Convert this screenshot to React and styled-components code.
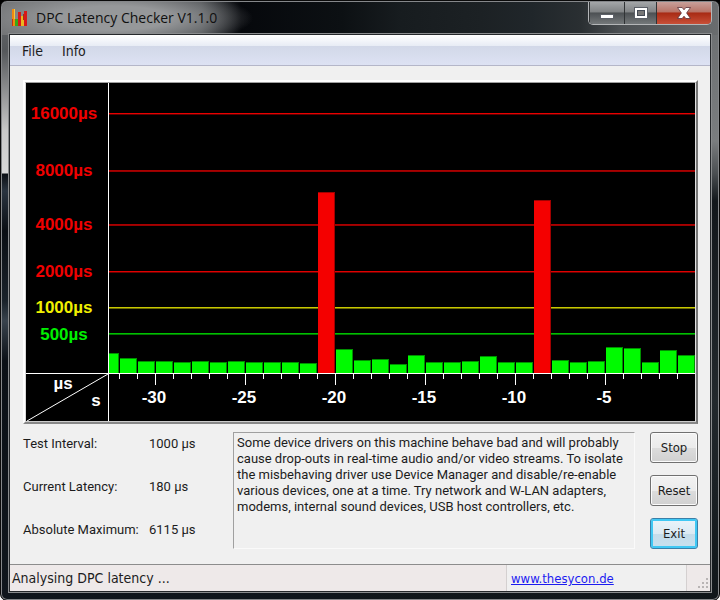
import React from "react";
import styled, { createGlobalStyle } from "styled-components";

const uiFont = '"DejaVu Sans Condensed", "DejaVu Sans", sans-serif';
const textFont = 'Roboto, "Liberation Sans", sans-serif';
const titleFont = '"Open Sans", "Noto Sans", sans-serif';

// y positions are in the chart's own units, from the top of the plot
const levels = [
  { label: "16000µs", y: 30, textY: 36, line: "#e80000", shade: "#600000", color: "#f00000" },
  { label: "8000µs", y: 87, textY: 93, line: "#a80000", shade: "#980000", color: "#f00000" },
  { label: "4000µs", y: 141, textY: 147, line: "#a80000", shade: "#980000", color: "#f00000" },
  { label: "2000µs", y: 188, textY: 194, line: "#e00000", shade: "#680000", color: "#f00000" },
  { label: "1000µs", y: 224, textY: 230, line: "#c8c800", shade: "#6c6c00", color: "#f0f000" },
  { label: "500µs", y: 250, textY: 257, line: "#00c000", shade: "#007800", color: "#00f000" },
];

const samples = [
  20, 15, 12, 12, 11, 12, 11, 12, 11, 11, 11, 10, 181, 24, 13, 14, 9, 18, 11,
  11, 12, 17, 11, 11, 173, 13, 11, 12, 26, 25, 11, 23, 18,
];

const seconds = [-30, -25, -20, -15, -10, -5];

const stats = [
  { name: "Test Interval:", value: "1000 µs" },
  { name: "Current Latency:", value: "180 µs" },
  { name: "Absolute Maximum:", value: "6115 µs" },
];

const BASE = 290;
const STEP = 18;
const AXIS = 82;

const Chart = () => {
  return (
    <ChartFrame>
      <Plot viewBox="0 0 669 338" role="img" aria-label="DPC latency">
        <rect width="669" height="338" fill="#000" />
        {levels.map((el) => (
          <g key={el.label}>
            <rect x={AXIS} y={el.y} width="587" height="1" fill={el.line} />
            <rect x={AXIS} y={el.y + 1} width="587" height="1" fill={el.shade} />
            <ChartText x="38" y={el.textY} fill={el.color}>
              {el.label}
            </ChartText>
          </g>
        ))}
        {samples.map((value, i) => {
          const x = i === 0 ? AXIS + 1 : 76 + i * STEP;
          const width = i === 0 ? 10 : 17;
          const high = value > 100;
          return (
            <g key={i}>
              <rect
                x={x}
                y={BASE - value}
                width={width}
                height={value}
                fill={high ? "#a00000" : "#009000"}
              />
              <rect
                x={x}
                y={BASE - value + 1}
                width={width - 1}
                height={value - 1}
                fill={high ? "#f40000" : "#00fa00"}
              />
            </g>
          );
        })}
        <rect x={AXIS} width="1" height="338" fill="#fff" />
        <rect y={BASE} width="669" height="1" fill="#fff" />
        {samples.map((value, i) => (
          <rect
            key={i}
            x={93 + i * STEP}
            y={BASE + 1}
            width="1"
            height={i % 5 === 2 ? 11 : 5}
            fill="#fff"
          />
        ))}
        {seconds.map((el, i) => (
          <ChartText key={el} x={128 + i * 90} y="320" fill="#fff">
            {el}
          </ChartText>
        ))}
        <path d="M1 338L82 291" stroke="#fff" strokeWidth="1" />
        <ChartText x="37" y="306" fill="#fff">
          µs
        </ChartText>
        <ChartText x="70" y="323" fill="#fff">
          s
        </ChartText>
      </Plot>
    </ChartFrame>
  );
};

const AppIcon = () => (
  <svg width="17" height="19" viewBox="0 0 17 19" aria-hidden="true">
    <rect x="1" y="1" width="3" height="17" fill="#f08a10" />
    <rect x="1" y="11" width="1" height="7" fill="#c83010" />
    <rect x="3" y="1" width="1" height="10" fill="#f8c840" />
    <rect x="4" y="11" width="3" height="7" fill="#38a818" />
    <rect x="7" y="4" width="3" height="14" fill="#d81818" />
    <rect x="10" y="8" width="3" height="10" fill="#e8b820" />
    <rect x="12" y="6" width="1" height="6" fill="#a83010" />
    <rect x="13" y="3" width="3" height="15" fill="#d81818" />
  </svg>
);

const App = () => {
  return (
    <>
      <GlobalStyle />
      <Window>
        <TitleBar>
          <AppIcon />
          <Title>DPC Latency Checker V1.1.0</Title>
          <Controls>
            <ControlButton $width={35} aria-label="Minimize">
              <svg width="14" height="14" viewBox="0 0 14 14">
                <rect x="0.5" y="8.500" width="13" height="4" fill="#fff" stroke="#5c6068" />
              </svg>
            </ControlButton>
            <ControlButton $width={32} aria-label="Maximize">
              <svg width="14" height="12" viewBox="0 0 14 12">
                <rect x="0.5" y="0.5" width="13" height="11" fill="#fff" stroke="#5c6068" />
                <rect x="3.5" y="3.5" width="7" height="5" fill="#777" stroke="#444a55" />
              </svg>
            </ControlButton>
            <ControlButton $width={55} $close aria-label="Close">
              <svg width="14" height="12" viewBox="0 0 14 12">
                <path
                  d="M.5.5h4.700L7 2.800 8.800.5h4.700L9.600 6l3.900 5.500H8.800L7 9.200 5.200 11.500H.5L4.400 6z"
                  fill="#fff"
                  stroke="#5a3038"
                  strokeWidth="0.8"
                />
              </svg>
            </ControlButton>
          </Controls>
        </TitleBar>
        <Client>
          <MenuBar>
            <MenuButton>File</MenuButton>
            <MenuButton>Info</MenuButton>
          </MenuBar>
          <Content>
            <Chart />
            <Details>
              <Stats>
                {stats.map((el) => (
                  <Stat key={el.name}>
                    <dt>{el.name}</dt>
                    <dd>{el.value}</dd>
                  </Stat>
                ))}
              </Stats>
              <Message>
                Some device drivers on this machine behave bad and will probably
                cause drop-outs in real-time audio and/or video streams. To
                isolate the misbehaving driver use Device Manager and
                disable/re-enable various devices, one at a time. Try network
                and W-LAN adapters, modems, internal sound devices, USB host
                controllers, etc.
              </Message>
              <Actions>
                <ActionButton>Stop</ActionButton>
                <ActionButton>Reset</ActionButton>
                <ActionButton $focused>Exit</ActionButton>
              </Actions>
            </Details>
          </Content>
          <StatusBar>
            <StatusText>Analysing DPC latency ...</StatusText>
            <LinkPanel>
              <a href="#thesycon">www.thesycon.de</a>
            </LinkPanel>
            <Grip>
              <svg width="11" height="11" viewBox="0 0 11 11" aria-hidden="true">
                <path
                  d="M8 0h2v2h-2zM4 4h2v2h-2zM8 4h2v2h-2zM0 8h2v2h-2zM4 8h2v2h-2zM8 8h2v2h-2z"
                  fill="#b8b4b4"
                />
              </svg>
            </Grip>
          </StatusBar>
        </Client>
      </Window>
    </>
  );
};

export default App;

const GlobalStyle = createGlobalStyle`
  * {
    box-sizing: border-box;
  }

  body {
    margin: 0;
    background: linear-gradient(#000 50%, #fff 50%);
    color: #1c1c1c;
    font-family: ${uiFont};
    font-size: 13px;
  }

  button {
    font: inherit;
    color: inherit;
    padding: 0;
  }
`;

const Window = styled.div`
  display: flex;
  flex-direction: column;
  min-height: 100vh;
  padding: 1px 7px 7px;
  border: 1px solid #0a0a0a;
  border-radius: 7px;
  box-shadow: inset 0 0 0 1px #85878a;
  background:
    radial-gradient(ellipse 140px 30px at 112px 17px, #96989a 40%, rgba(150, 152, 154, 0) 100%) no-repeat 0 0 / 100% 34px,
    linear-gradient(90deg, #6f7173 0, #6f7173 60px, #4a4d50 200px, #06080c 240px, #0c1013 340px, #171c1f 400px, #1c2124 480px, #20262a 530px, #2a2f32 580px, #4c5053 620px, #6a6d6f 100%) no-repeat 0 0 / 100% 34px,
    linear-gradient(#6a6d70 0, #55585b 50px, #c8c8c8 130px, #d8d8d8 172px, #0b0f14 173px, #2a3440 190px, #0a0e13 230px, #1a222a 300px, #39434d 320px, #0b1016 360px, #10161c 100%) no-repeat 0 0 / 50% 100%,
    linear-gradient(#6a6d6f 0, #7a7d7f 140px, #4c5053 172px, #12171b 200px, #22282c 400px, #10161a 100%) no-repeat 100% 0 / 50% 100%;
`;

const TitleBar = styled.header`
  display: flex;
  align-items: center;
  height: 31px;
  padding-left: 3px;
`;

const Title = styled.h1`
  flex: 1;
  margin: 0;
  padding-left: 8px;
  font-family: ${titleFont};
  font-size: 14px;
  font-weight: normal;
  color: #101010;
`;

const Controls = styled.div`
  display: flex;
  align-self: flex-start;
  height: 23px;
  border: 1px solid #b4b6b8;
  border-top: none;
  border-radius: 0 0 5px 5px;
  overflow: hidden;
`;

const ControlButton = styled.button`
  display: flex;
  align-items: center;
  justify-content: center;
  width: ${(props) => props.$width}px;
  border: none;
  border-left: 1px solid #303335;
  background: ${(props) =>
    props.$close
      ? "linear-gradient(#c8a09a 0, #b87468 45%, #a82a14 50%, #c85038 100%)"
      : "linear-gradient(#a4a6a8 0, #808385 45%, #4c5053 50%, #74787a 100%)"};
`;

const Client = styled.main`
  display: flex;
  flex: 1;
  flex-direction: column;
  border: 1px solid #25282b;
  outline: 1px solid #8a8c8e;
  margin: 1px;
  background-color: #f0f0f0;
`;

const MenuBar = styled.nav`
  display: flex;
  gap: 19px;
  height: 31px;
  padding: 2px 0 0 12px;
  border-bottom: 1px solid #b4b6c8;
  background: linear-gradient(#fff 0, #e8ecf5 36%, #d2d8e8 38%, #dde2f3 100%);
`;

const MenuButton = styled.button`
  border: none;
  background: none;
  font-size: 14px;
`;

const Content = styled.section`
  flex: 1;
  padding: 14px 12px 15px 13px;
`;

const ChartFrame = styled.div`
  border: 2px solid;
  border-color: #fff #777 #888 #fff;
`;

const Plot = styled.svg`
  display: block;
  width: 100%;
  border: 1px solid;
  border-color: #a0a0a0 #e0e0e0 #ccc #d8d8d8;
`;

const ChartText = styled.text`
  font-family: "Liberation Sans", Arial, sans-serif;
  font-size: 17px;
  font-weight: bold;
  text-anchor: middle;
`;

const Details = styled.div`
  display: grid;
  grid-template-columns: 210px 1fr 48px;
  margin-top: 8px;
`;

const Stats = styled.dl`
  display: grid;
  grid-auto-rows: 31px;
  row-gap: 12px;
  margin: 0;
  font-family: ${textFont};
`;

const Stat = styled.div`
  display: grid;
  grid-template-columns: 126px 1fr;
  line-height: 24px;

  dd {
    margin: 0;
  }
`;

const Message = styled.p`
  margin: 0 15px 0 0;
  padding: 2px 3px;
  border: 1px solid;
  border-color: #a0a0a0 #fafafa #fafafa #a0a0a0;
  font-family: ${textFont};
  line-height: 16px;
`;

const Actions = styled.div`
  display: grid;
  grid-auto-rows: 31px;
  row-gap: 12px;
`;

const ActionButton = styled.button`
  border: 1px solid ${(props) => (props.$focused ? "#3a7fa8" : "#707070")};
  border-radius: 3px;
  box-shadow: inset 0 0 0 ${(props) => (props.$focused ? "2px #40c8f4" : "1px #fbfbfb")};
  background: ${(props) =>
    props.$focused
      ? "linear-gradient(#eaf4fa 0, #dceaf3 50%, #c4dcea 52%, #c8e0ee 100%)"
      : "linear-gradient(#f2f2f2 0, #ebebeb 50%, #dcdcdc 52%, #d0d0d0 100%)"};
`;

const StatusBar = styled.footer`
  display: flex;
  height: 27px;
  border-top: 1px solid #8c8c8c;
  background-color: #eee9e9;
  line-height: 27px;
`;

const StatusText = styled.div`
  flex: 1;
  padding-left: 2px;
  font-size: 14px;
`;

const LinkPanel = styled.div`
  width: 181px;
  padding-left: 4px;
  border: solid #d4d0d0;
  border-width: 0 1px;
  background-color: #f0f0f0;

  a {
    color: #1c1cf0;
  }
`;

const Grip = styled.div`
  display: flex;
  align-items: flex-end;
  justify-content: flex-end;
  width: 23px;
  padding: 0 1px 2px 0;
`;
